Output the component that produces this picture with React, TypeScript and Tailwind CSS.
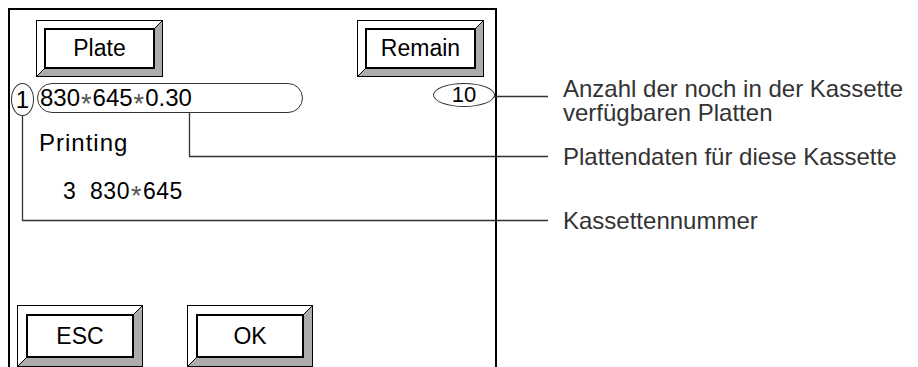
import React from "react";

const FONT = "font-['Liberation_Sans','Arial',sans-serif]";

type BevelProps = {
  label: string;
  w: number;
  h: number;
  bevel: number;
  outerClass: string;
  bevelClass: string;
  innerClass: string;
};

// 3D-looking keypad button: black frame, light top/left, grey bottom/right
const BevelButton = ({ label, w, h, bevel, outerClass, bevelClass, innerClass }: BevelProps) => {
  const b = bevel + 1;
  return (
    <div className={`relative shrink-0 border border-black bg-white ${outerClass}`}>
      <div className={`border-t-white border-l-white border-r-[#acacac] border-b-[#acacac] ${bevelClass}`}>
        <div className={`flex items-center justify-center border-2 border-black bg-white text-[23px] text-black ${innerClass}`}>
          {label}
        </div>
      </div>
      <svg className="pointer-events-none absolute left-[-1px] top-[-1px]" width={w} height={h}>
        <line x1={w - 0.5} y1={0.5} x2={w - b - 0.5} y2={b + 0.5} stroke="#000" strokeWidth={1} />
        <line x1={0.5} y1={h - 0.5} x2={b + 0.5} y2={h - b - 0.5} stroke="#000" strokeWidth={1} />
      </svg>
    </div>
  );
};

const Star = () => (
  <span className="mx-[1px] inline-block translate-y-[6px] text-[27px] leading-none text-[#555]">*</span>
);

export default function App() {
  return (
    <div className={`relative h-[367px] w-[918px] overflow-hidden bg-white ${FONT}`}>
      <div className="flex">
        {/* Display panel */}
        <div className="ml-[8px] mt-[8px] flex h-[420px] w-[489px] shrink-0 flex-col border-2 border-b-0 border-black">
          <div className="flex justify-between pl-[26px] pr-[11px] pt-[10px]">
            <BevelButton
              label="Plate"
              w={127}
              h={57}
              bevel={7}
              outerClass="w-[127px] h-[57px]"
              bevelClass="border-[7px]"
              innerClass="w-[111px] h-[41px]"
            />
            <BevelButton
              label="Remain"
              w={127}
              h={57}
              bevel={7}
              outerClass="w-[127px] h-[57px]"
              bevelClass="border-[7px]"
              innerClass="w-[111px] h-[41px]"
            />
          </div>

          <div className="mt-[6px] flex items-start">
            <div className="ml-[1px] flex h-[33px] w-[23px] items-center justify-center rounded-[50%] border border-[#333] text-[24px] leading-none">
              1
            </div>
            <div className="ml-[3px] flex h-[30px] w-[266px] items-center rounded-full border border-[#333] pl-[2px] text-[24px] leading-none">
              830<Star />645<Star />0.30
            </div>
            <div className="flex-1" />
            <div className="flex h-[24px] w-[62px] items-center justify-center rounded-[50%] border border-[#333] text-[22px] leading-none">
              10
            </div>
          </div>

          <div className="ml-[29px] mt-[13px] text-[24px] leading-[28px] tracking-[1px] text-black">Printing</div>
          <div className="ml-[53px] mt-[20px] whitespace-pre text-[23px] leading-[28px] tracking-[0.5px] text-black">
            3  830<Star />645
          </div>

          <div className="ml-[7px] mt-[100px] flex gap-[44px]">
            <BevelButton
              label="ESC"
              w={126}
              h={62}
              bevel={8}
              outerClass="w-[126px] h-[62px]"
              bevelClass="border-[8px]"
              innerClass="w-[108px] h-[44px]"
            />
            <BevelButton
              label="OK"
              w={126}
              h={62}
              bevel={8}
              outerClass="w-[126px] h-[62px]"
              bevelClass="border-[8px]"
              innerClass="w-[108px] h-[44px]"
            />
          </div>
        </div>

        {/* Callout texts */}
        <div className="ml-[66px] flex flex-col text-[24px] leading-[24px] text-[#333]">
          <div className="mt-[77px] whitespace-nowrap">
            Anzahl der noch in der Kassette
            <br />
            verfügbaren Platten
          </div>
          <div className="mt-[20px] whitespace-nowrap">Plattendaten für diese Kassette</div>
          <div className="mt-[40px]">Kassettennummer</div>
        </div>
      </div>

      {/* Leader lines */}
      <svg className="pointer-events-none absolute left-0 top-0" width={918} height={367}>
        <g fill="none" stroke="#333" strokeWidth={1.3}>
          <path d="M22.5 116 V220.5 H548" />
          <path d="M189.5 113 V156.5 H548" />
          <path d="M494 96.5 H548" />
        </g>
      </svg>
    </div>
  );
}
